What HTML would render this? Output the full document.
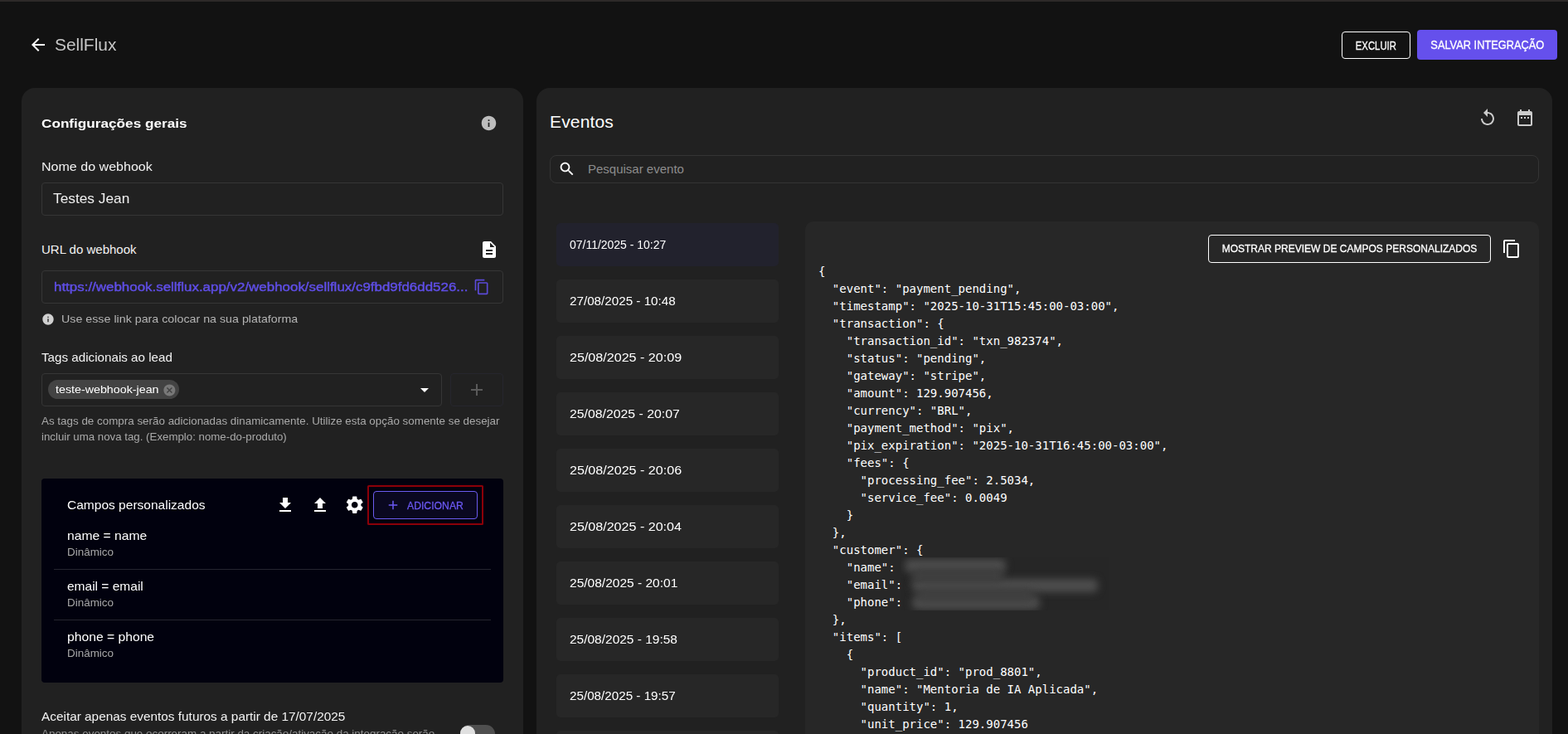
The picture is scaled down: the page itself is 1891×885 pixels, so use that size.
<!DOCTYPE html>
<html lang="pt-BR">
<head>
<meta charset="utf-8">
<title>SellFlux - Webhook</title>
<style>
*{box-sizing:border-box;margin:0;padding:0}
html,body{width:1891px;height:885px;overflow:hidden;background:#121212}
body{position:relative;font-family:"Liberation Sans",sans-serif;color:#fff;-webkit-font-smoothing:antialiased}
.abs{position:absolute}
.topbar{position:absolute;left:0;top:0;width:1891px;height:2px;background:#2d2928}
.t{position:absolute;white-space:nowrap;line-height:1}
svg{position:absolute;display:block}

/* header */
.title{left:66px;top:43px;font-size:19.500px;color:#c6c6c6;line-height:22px}
.btn{position:absolute;display:flex;align-items:center;justify-content:center;font-size:14px;border-radius:4px;white-space:nowrap}
.btn-excluir{left:1618px;top:38px;width:83px;height:33px;border:1px solid #fff;color:#fff;font-size:14px}
.btn span{display:inline-block}
#t_excluir{transform:scaleX(.81)}
#t_salvar{transform:scaleX(.915)}
#t_prev{transform:scaleX(.924);position:relative;top:-1px}
.btn span{-webkit-text-stroke:.3px currentColor}
.btn-salvar{left:1709px;top:36px;width:169px;height:36px;background:#6550ec;color:#fff;font-size:14px}

/* cards */
.card{position:absolute;background:#212121;border-radius:16px 16px 0 0}
.card-left{left:26px;top:106px;width:605px;height:800px}
.card-right{left:647px;top:106px;width:1225px;height:800px}

.h-cfg{left:50px;top:140px;font-size:15.5px;font-weight:bold;line-height:18px}
.lbl{font-size:15px;line-height:18px;color:#f2f2f2}
.input{position:absolute;border:1px solid #363636;border-radius:4px;background:#212121}
.help{font-size:13px;color:#b4b4b4;line-height:16px}

.chip{position:absolute;left:58px;top:458px;width:158px;height:23px;border-radius:12px;background:#434343}
.darkbox{position:absolute;left:50px;top:577px;width:557px;height:246px;background:#01010e;border-radius:4px}
.redbox{position:absolute;left:443px;top:585px;width:140px;height:48px;border:2px solid #8b0008;border-radius:1.500px}
.btn-add{left:450px;top:592px;width:126px;height:34px;border:1px solid #6b5cf0;background:#0a0820;color:#6a58f2;font-size:13px;border-radius:4px}
.fld{font-size:15px;line-height:18px;color:#fff}
.dyn{font-size:12px;line-height:14px;color:#a8a8a8;transform:scaleX(1.12);transform-origin:0 50%}
.divider{position:absolute;left:65px;width:527px;height:1px;background:#25252f}

/* events */
.h-ev{left:663px;top:134px;font-size:21px;line-height:26px;color:#fff;letter-spacing:.15px}
.search{position:absolute;left:663px;top:187px;width:1193px;height:34px;border:1px solid #343434;border-radius:8px}
.ev{position:absolute;left:671px;width:268px;height:52px;border-radius:5px;background:#272727;font-size:14.5px;line-height:52px;padding-left:16px;color:#fff;white-space:nowrap}
.ev.sel{background:#22222d}
.json{position:absolute;left:971px;top:267px;width:885px;height:640px;background:#272727;border-radius:10px 10px 0 0}
pre{position:absolute;left:987px;top:317px;font-family:"DejaVu Sans Mono","Liberation Mono",monospace;font-size:14px;line-height:21px;color:#fff}
.blurbox{position:absolute;left:1086px;top:672px;width:252px;height:64px;background:#262626;overflow:hidden}
.blurbox i{position:absolute;display:block;height:16px;background:#4e4e4e;filter:blur(5px);border-radius:6px}
.btn-prev{left:1457px;top:283px;width:341px;height:34px;border:1px solid #fff;color:#fff;font-size:13px}
</style>
</head>
<body>
<div class="topbar"></div>

<!-- header -->
<svg style="left:34px;top:42px" width="24" height="24" viewBox="0 0 24 24"><path fill="#fff" d="M20 11H7.83l5.59-5.59L12 4l-8 8 8 8 1.41-1.41L7.83 13H20v-2z"/></svg>
<div id="t_title" style="display:inline-block;transform:scaleX(1.0725);transform-origin:0 50%;" class="t title">SellFlux</div>
<div class="btn btn-excluir"><span id="t_excluir">EXCLUIR</span></div>
<div class="btn btn-salvar"><span id="t_salvar">SALVAR INTEGRAÇÃO</span></div>

<!-- left card -->
<div class="card card-left"></div>
<div id="t_cfg" style="display:inline-block;transform:scaleX(1.1076);transform-origin:0 50%;" class="t h-cfg">Configurações gerais</div>
<svg style="left:578.5px;top:137.7px" width="21" height="21" viewBox="0 0 24 24"><path fill="#bdbdbd" d="M12 2C6.48 2 2 6.48 2 12s4.48 10 10 10 10-4.48 10-10S17.52 2 12 2zm1 15h-2v-6h2v6zm0-8h-2V7h2v2z"/></svg>

<div id="t_nome" class="t lbl" style="display:inline-block;transform:scaleX(1.0694);transform-origin:0 50%;left:50px;top:192px">Nome do webhook</div>
<div class="input" style="left:50px;top:220px;width:557px;height:40px"></div>
<div id="t_testes" class="t" style="display:inline-block;transform:scaleX(1.0178);transform-origin:0 50%;left:64px;top:230px;font-size:17px;line-height:20px;color:#f0f0f0">Testes Jean</div>

<div id="t_url_lbl" class="t lbl" style="left:50px;top:292px">URL do webhook</div>
<svg style="left:578px;top:289px" width="24" height="24" viewBox="0 0 24 24"><path fill="#fff" d="M14 2H6c-1.1 0-1.99.9-1.99 2L4 20c0 1.100.89 2 1.990 2H18c1.100 0 2-.9 2-2V8l-6-6zm2 16H8v-2h8v2zm0-4H8v-2h8v2zm-3-5V3.500L18.500 9H13z"/></svg>
<div class="input" style="left:50px;top:326px;width:557px;height:40px"></div>
<div id="t_url" class="t" style="display:inline-block;transform:scaleX(1.0915);transform-origin:0 50%;left:65px;top:337px;font-size:15.500px;line-height:18px;-webkit-text-stroke:.45px #5f4ee6;color:#5f4ee6">https://webhook.sellflux.app/v2/webhook/sellflux/c9fbd9fd6dd526...</div>
<svg style="left:571.3px;top:336px" width="20" height="20" viewBox="0 0 24 24"><path fill="#5b4ad8" d="M16 1H4c-1.100 0-2 .9-2 2v14h2V3h12V1zm3 4H8c-1.100 0-2 .9-2 2v14c0 1.100.9 2 2 2h11c1.100 0 2-.9 2-2V7c0-1.100-.9-2-2-2zm0 16H8V7h11v14z"/></svg>

<svg style="left:50px;top:377px" width="16" height="16" viewBox="0 0 24 24"><path fill="#d0d0d0" d="M12 2C6.48 2 2 6.48 2 12s4.48 10 10 10 10-4.48 10-10S17.52 2 12 2zm1 15h-2v-6h2v6zm0-8h-2V7h2v2z"/></svg>
<div id="t_use" class="t help" style="display:inline-block;transform:scaleX(1.0966);transform-origin:0 50%;left:74px;top:377px">Use esse link para colocar na sua plataforma</div>

<div id="t_tags" class="t lbl" style="display:inline-block;transform:scaleX(1.0128);transform-origin:0 50%;left:50px;top:422px">Tags adicionais ao lead</div>
<div class="input" style="left:50px;top:450px;width:483px;height:40px"></div>
<div class="chip"></div>
<div id="t_chip" class="t" style="display:inline-block;transform:scaleX(1.0973);transform-origin:0 50%;left:67px;top:462px;font-size:13px;line-height:15px;color:#fff">teste-webhook-jean</div>
<svg style="left:195.6px;top:461.6px" width="16.800" height="16.800" viewBox="0 0 24 24"><path fill="#787878" d="M12 2C6.470 2 2 6.470 2 12s4.470 10 10 10 10-4.470 10-10S17.530 2 12 2zm5 13.590L15.590 17 12 13.410 8.410 17 7 15.590 10.590 12 7 8.410 8.410 7 12 10.590 15.590 7 17 8.410 13.410 12 17 15.590z"/></svg>
<svg style="left:500px;top:458px" width="24" height="24" viewBox="0 0 24 24"><path fill="#fff" d="M7 10l5 5 5-5z"/></svg>
<div class="input" style="left:543px;top:450px;width:64px;height:40px;border-color:#26262e"></div>
<svg style="left:563px;top:458px" width="24" height="24" viewBox="0 0 24 24"><path fill="#5a5a5a" d="M19 13h-6v6h-2v-6H5v-2h6V5h2v6h6v2z"/></svg>
<div id="t_help1" class="t help" style="display:inline-block;transform:scaleX(1.0304);transform-origin:0 50%;left:50px;top:500px;color:#a9a9a9">As tags de compra serão adicionadas dinamicamente. Utilize esta opção somente se desejar</div>
<div id="t_help2" class="t help" style="display:inline-block;transform:scaleX(1.0207);transform-origin:0 50%;left:50px;top:519px;color:#a9a9a9">incluir uma nova tag. (Exemplo: nome-do-produto)</div>

<div class="darkbox"></div>
<div id="t_campos" class="t lbl" style="display:inline-block;transform:scaleX(1.0348);transform-origin:0 50%;left:81px;top:600px;color:#fff">Campos personalizados</div>
<svg style="left:331.6px;top:597px" width="24" height="24" viewBox="0 0 24 24"><path fill="#fff" d="M19 9h-4V3H9v6H5l7 7 7-7zM5 18v2h14v-2H5z"/></svg>
<svg style="left:373.6px;top:597px" width="24" height="24" viewBox="0 0 24 24"><path fill="#fff" d="M9 16h6v-6h4l-7-7-7 7h4zm-4 2h14v2H5z"/></svg>
<svg style="left:414.9px;top:596.3px" width="25.500" height="25.500" viewBox="0 0 24 24"><path fill="#fff" d="M19.140 12.940c.04-.3.060-.61.060-.94 0-.32-.02-.64-.07-.94l2.030-1.580c.18-.14.230-.41.120-.61l-1.920-3.320c-.12-.22-.37-.29-.59-.22l-2.390.96c-.5-.38-1.030-.7-1.620-.94l-.36-2.540c-.04-.24-.24-.41-.48-.41h-3.840c-.24 0-.43.170-.47.410l-.36 2.540c-.59.240-1.130.570-1.620.94l-2.390-.96c-.22-.08-.47 0-.59.220L2.740 8.870c-.12.210-.08.470.12.610l2.030 1.580c-.05.300-.09.630-.09.940s.02.640.07.940l-2.030 1.580c-.18.140-.23.410-.12.610l1.920 3.320c.12.220.37.290.59.220l2.390-.96c.5.380 1.030.7 1.620.94l.36 2.540c.05.240.24.410.48.410h3.840c.24 0 .44-.17.470-.41l.36-2.540c.59-.24 1.130-.56 1.620-.94l2.390.96c.22.080.47 0 .59-.22l1.920-3.320c.12-.22.070-.47-.12-.61l-2.010-1.580zM12 15.600c-1.980 0-3.600-1.620-3.600-3.600s1.620-3.600 3.600-3.600 3.600 1.620 3.600 3.600-1.620 3.600-3.600 3.600z"/></svg>
<div class="redbox"></div>
<div class="btn btn-add"><span id="t_add" style="position:absolute;left:40px;top:10px;line-height:14px;transform:scaleX(.94);transform-origin:0 50%">ADICIONAR</span></div>
<svg style="left:464.5px;top:600px" width="18" height="18" viewBox="0 0 24 24"><path fill="#6a58f2" d="M19 13h-6v6h-2v-6H5v-2h6V5h2v6h6v2z"/></svg>

<div id="t_name" class="t fld" style="display:inline-block;transform:scaleX(1.0435);transform-origin:0 50%;left:81px;top:637px">name = name</div>
<div class="t dyn" style="left:81px;top:659px">Dinâmico</div>
<div class="divider" style="top:686px"></div>
<div id="t_email" class="t fld" style="display:inline-block;transform:scaleX(1.0337);transform-origin:0 50%;left:81px;top:698px">email = email</div>
<div class="t dyn" style="left:81px;top:720px">Dinâmico</div>
<div class="divider" style="top:747px"></div>
<div id="t_phone" class="t fld" style="display:inline-block;transform:scaleX(1.0455);transform-origin:0 50%;left:81px;top:759px">phone = phone</div>
<div class="t dyn" style="left:81px;top:781px">Dinâmico</div>

<div id="t_aceitar" class="t lbl" style="display:inline-block;transform:scaleX(1.0240);transform-origin:0 50%;left:50px;top:855px">Aceitar apenas eventos futuros a partir de 17/07/2025</div>
<div id="t_apenas" class="t help" style="display:inline-block;transform:scaleX(1.0319);transform-origin:0 50%;left:50px;top:877px;color:#909090">Apenas eventos que ocorreram a partir da criação/ativação da integração serão</div>
<div class="abs" style="left:555px;top:874px;width:42px;height:22px;border-radius:11px;background:#4f4f4f"></div>
<div class="abs" style="left:555px;top:874.5px;width:18px;height:18px;border-radius:9px;background:#e0e0e0"></div>

<!-- right card -->
<div class="card card-right"></div>
<div id="t_eventos" class="t h-ev">Eventos</div>
<svg style="left:1782px;top:130px" width="24" height="24" viewBox="0 0 24 24"><path fill="#cbcbcb" d="M12 5V1L7 6l5 5V7c3.310 0 6 2.690 6 6s-2.690 6-6 6-6-2.690-6-6H4c0 4.420 3.580 8 8 8s8-3.580 8-8-3.580-8-8-8z"/></svg>
<svg style="left:1827px;top:130px" width="24" height="24" viewBox="0 0 24 24"><path fill="#cbcbcb" d="M9 11H7v2h2v-2zm4 0h-2v2h2v-2zm4 0h-2v2h2v-2zm2-7h-1V2h-2v2H8V2H6v2H5c-1.110 0-1.990.9-1.990 2L3 20c0 1.100.89 2 2 2h14c1.100 0 2-.9 2-2V6c0-1.100-.9-2-2-2zm0 16H5V9h14v11z"/></svg>
<div class="search"></div>
<svg style="left:672.8px;top:193.1px" width="21.500" height="21.500" viewBox="0 0 24 24"><path fill="#fff" d="M15.500 14h-.79l-.28-.27C15.410 12.590 16 11.110 16 9.500 16 5.910 13.090 3 9.500 3S3 5.910 3 9.500 5.910 16 9.500 16c1.610 0 3.090-.59 4.230-1.570l.27.28v.79l5 4.990L20.490 19l-4.990-5zm-6 0C7.010 14 5 11.990 5 9.500S7.010 5 9.500 5 14 7.010 14 9.500 11.990 14 9.500 14z"/></svg>
<div id="t_pesq" class="t" style="left:709px;top:195px;font-size:15px;line-height:18px;color:#8c8c8c">Pesquisar evento</div>

<div class="ev sel" style="top:269px"><span id="t_ev1" style="display:inline-block;transform:scaleX(0.9636);transform-origin:0 50%;">07/11/2025 - 10:27</span></div>
<div class="ev" style="top:337px"><span id="t_ev2" style="display:inline-block;transform:scaleX(1.0492);transform-origin:0 50%;">27/08/2025 - 10:48</span></div>
<div class="ev" style="top:405px"><span id="t_ev3" style="display:inline-block;transform:scaleX(1.1098);transform-origin:0 50%;">25/08/2025 - 20:09</span></div>
<div class="ev" style="top:473px"><span id="t_ev4" style="display:inline-block;transform:scaleX(1.0902);transform-origin:0 50%;">25/08/2025 - 20:07</span></div>
<div class="ev" style="top:541px"><span id="t_ev5" style="display:inline-block;transform:scaleX(1.1098);transform-origin:0 50%;">25/08/2025 - 20:06</span></div>
<div class="ev" style="top:609px"><span id="t_ev6" style="display:inline-block;transform:scaleX(1.1082);transform-origin:0 50%;">25/08/2025 - 20:04</span></div>
<div class="ev" style="top:677px"><span id="t_ev7" style="display:inline-block;transform:scaleX(1.0705);transform-origin:0 50%;">25/08/2025 - 20:01</span></div>
<div class="ev" style="top:745px"><span id="t_ev8" style="display:inline-block;transform:scaleX(1.0672);transform-origin:0 50%;">25/08/2025 - 19:58</span></div>
<div class="ev" style="top:813px"><span id="t_ev9" style="display:inline-block;transform:scaleX(1.0492);transform-origin:0 50%;">25/08/2025 - 19:57</span></div>
<div class="ev" style="top:881px"><span id="t_ev10" style="display:inline-block;transform:scaleX(1.05);transform-origin:0 50%">25/08/2025 - 19:55</span></div>

<div class="json"></div>
<div class="blurbox"><i style="left:5px;top:2px;width:122px"></i><i style="left:14px;top:26px;width:224px"></i><i style="left:14px;top:47px;width:154px"></i><i style="left:14px;top:14px;width:110px;background:#404040"></i><i style="left:20px;top:38px;width:140px;background:#404040"></i></div>
<div class="btn btn-prev"><span id="t_prev">MOSTRAR PREVIEW DE CAMPOS PERSONALIZADOS</span></div>
<svg style="left:1811px;top:287.7px" width="24" height="24" viewBox="0 0 24 24"><path fill="#fff" d="M16 1H4c-1.100 0-2 .9-2 2v14h2V3h12V1zm3 4H8c-1.100 0-2 .9-2 2v14c0 1.100.9 2 2 2h11c1.100 0 2-.9 2-2V7c0-1.100-.9-2-2-2zm0 16H8V7h11v14z"/></svg>
<pre>{
  "event": "payment_pending",
  "timestamp": "2025-10-31T15:45:00-03:00",
  "transaction": {
    "transaction_id": "txn_982374",
    "status": "pending",
    "gateway": "stripe",
    "amount": 129.907456,
    "currency": "BRL",
    "payment_method": "pix",
    "pix_expiration": "2025-10-31T16:45:00-03:00",
    "fees": {
      "processing_fee": 2.5034,
      "service_fee": 0.0049
    }
  },
  "customer": {
    "name":
    "email":
    "phone":
  },
  "items": [
    {
      "product_id": "prod_8801",
      "name": "Mentoria de IA Aplicada",
      "quantity": 1,
      "unit_price": 129.907456
    }</pre>
</body>
</html>
